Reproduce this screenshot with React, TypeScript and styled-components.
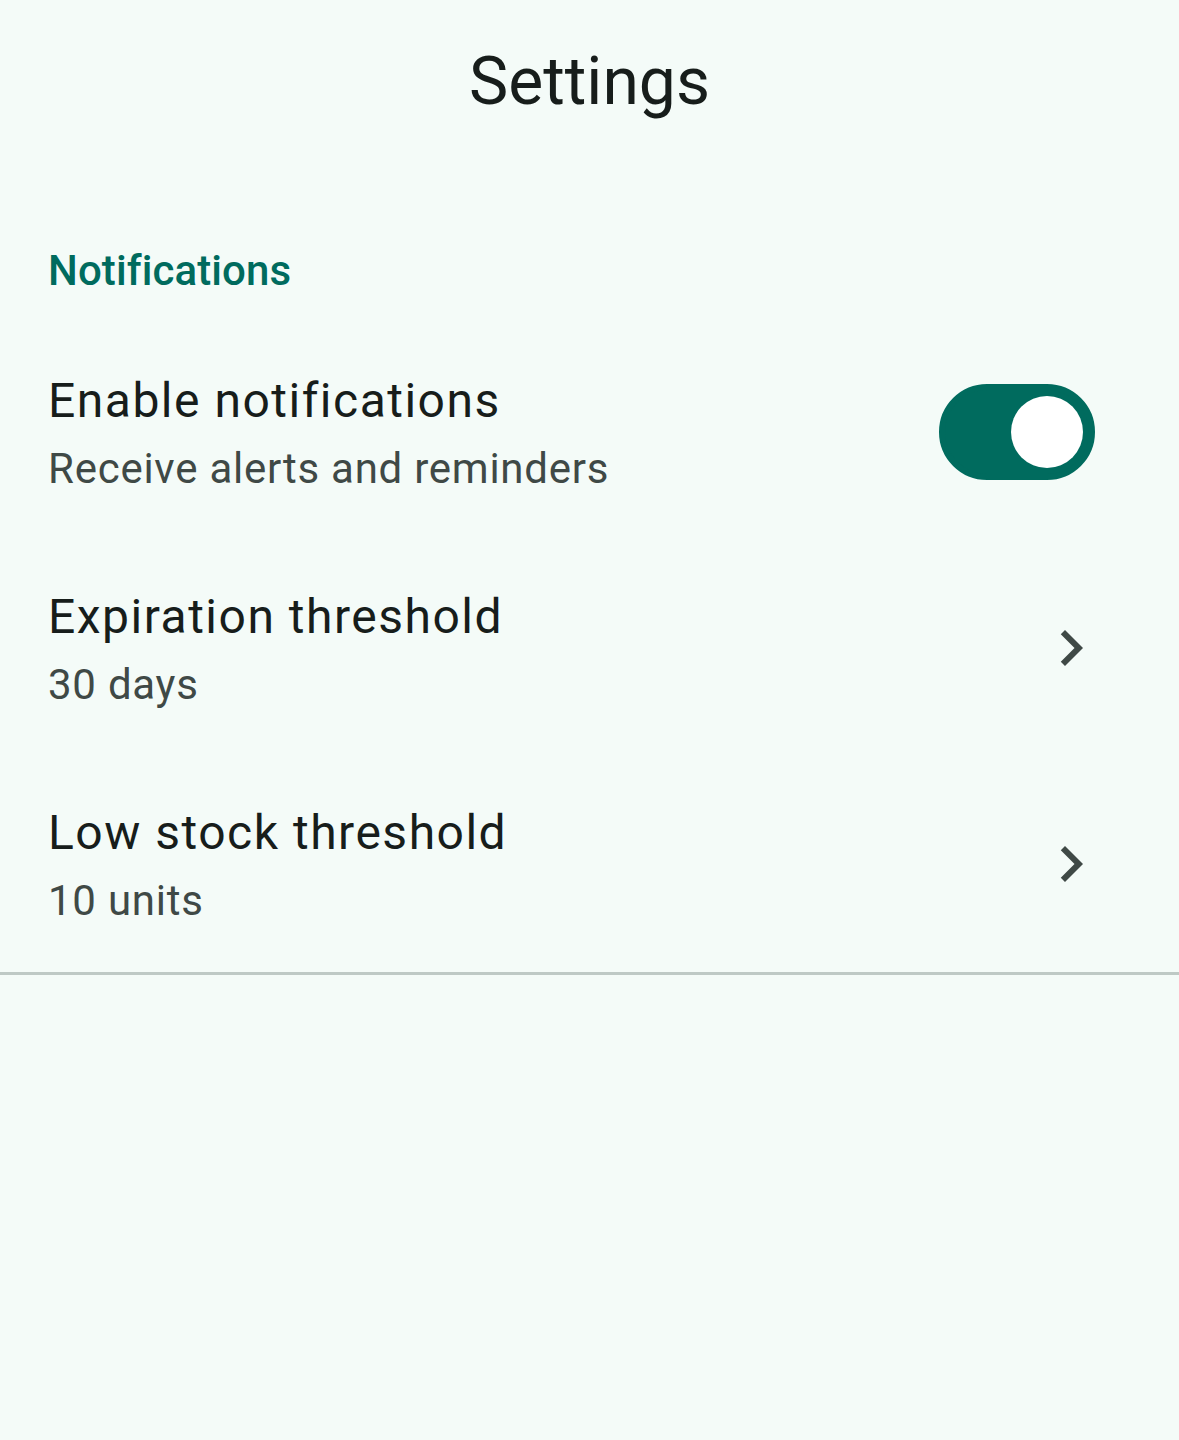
import React, { useState } from "react";
import styled, { createGlobalStyle } from "styled-components";

const GlobalStyle = createGlobalStyle`
  html, body {
    margin: 0;
    padding: 0;
    background: #f4fbf8;
  }
  body {
    font-family: Roboto, "Noto Sans", "Liberation Sans", sans-serif;
    -webkit-font-smoothing: antialiased;
  }
`;

const Screen = styled.div`
  min-height: 1440px;
  background: #f4fbf8;
  color: #171d1b;
  display: flex;
  flex-direction: column;
`;

const TopBar = styled.header`
  height: 164px;
  display: flex;
  align-items: center;
  justify-content: center;
`;

const Title = styled.h1`
  margin: 0;
  font-size: 66px;
  font-weight: 400;
  line-height: 164px;
  color: #171d1b;
`;

const SectionHeader = styled.div`
  padding: 79px 48px 25px;
  font-size: 42px;
  font-weight: 500;
  line-height: 56px;
  letter-spacing: 0.1px;
  color: #006b5e;
`;

const Row = styled.div`
  display: flex;
  align-items: center;
  padding: 40px 72px 40px 48px;
  cursor: pointer;
`;

const RowText = styled.div`
  flex: 1;
  display: flex;
  flex-direction: column;
`;

const RowTitle = styled.div`
  font-size: 48px;
  line-height: 73px;
  letter-spacing: 1.5px;
  color: #171d1b;
`;

const RowSubtitle = styled.div`
  font-size: 42px;
  line-height: 63px;
  letter-spacing: 0.75px;
  color: #3f4946;
`;

const Track = styled.button<{ $on: boolean }>`
  width: 156px;
  height: 96px;
  margin-right: 12px;
  border-radius: 48px;
  border: 6px solid ${({ $on }) => ($on ? "#006b5e" : "#6f7976")};
  background: ${({ $on }) => ($on ? "#006b5e" : "#dde4e1")};
  padding: 0;
  display: flex;
  align-items: center;
  justify-content: ${({ $on }) => ($on ? "flex-end" : "flex-start")};
  box-sizing: border-box;
  cursor: pointer;
`;

const Thumb = styled.span<{ $on: boolean }>`
  width: ${({ $on }) => ($on ? 72 : 48)}px;
  height: ${({ $on }) => ($on ? 72 : 48)}px;
  margin: 0 ${({ $on }) => ($on ? 6 : 18)}px;
  border-radius: 50%;
  background: ${({ $on }) => ($on ? "#ffffff" : "#6f7976")};
`;

const Chevron = styled.svg`
  width: 72px;
  height: 72px;
  flex: none;
  fill: #3f4946;
`;

const Divider = styled.hr`
  margin: 0;
  border: 0;
  height: 3px;
  background: #bec9c5;
`;

const ChevronRight = () => (
  <Chevron viewBox="0 0 24 24">
    <path d="M10 6L8.59 7.41 13.17 12l-4.58 4.59L10 18l6-6z" />
  </Chevron>
);

const App: React.FC = () => {
  const [enabled, setEnabled] = useState(true);

  return (
    <Screen>
      <GlobalStyle />
      <TopBar>
        <Title>Settings</Title>
      </TopBar>
      <SectionHeader>Notifications</SectionHeader>
      <Row>
        <RowText>
          <RowTitle>Enable notifications</RowTitle>
          <RowSubtitle>Receive alerts and reminders</RowSubtitle>
        </RowText>
        <Track $on={enabled} onClick={() => setEnabled(!enabled)}>
          <Thumb $on={enabled} />
        </Track>
      </Row>
      <Row>
        <RowText>
          <RowTitle>Expiration threshold</RowTitle>
          <RowSubtitle>30 days</RowSubtitle>
        </RowText>
        <ChevronRight />
      </Row>
      <Row>
        <RowText>
          <RowTitle>Low stock threshold</RowTitle>
          <RowSubtitle>10 units</RowSubtitle>
        </RowText>
        <ChevronRight />
      </Row>
      <Divider />
    </Screen>
  );
};

export default App;
